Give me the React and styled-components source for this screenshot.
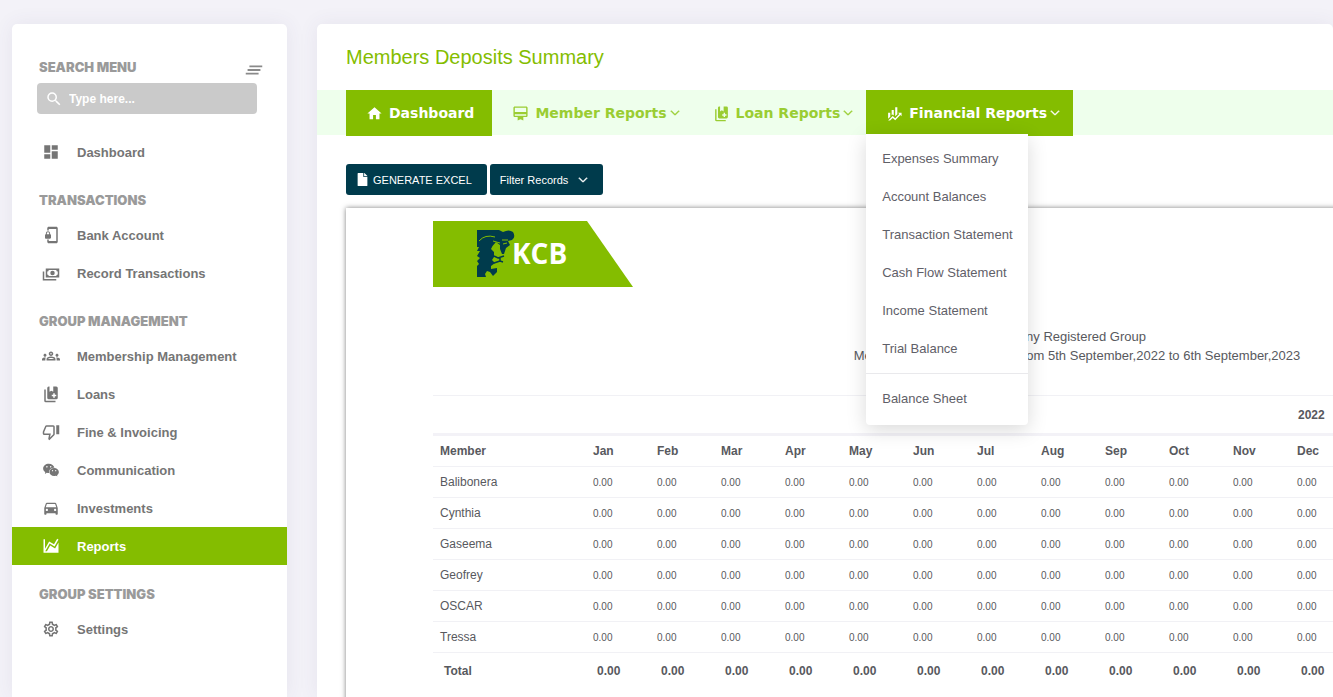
import React, { useState } from 'react'
import styled, { createGlobalStyle, css } from 'styled-components'
import {
  MdCardMembership,
  MdClearAll,
  MdDashboard,
  MdDirectionsCar,
  MdHome,
  MdOutlineGroups,
  MdOutlineSettings,
  MdPhonelinkLock,
  MdSearch,
} from 'react-icons/md'
import { AiFillWechat } from 'react-icons/ai'
import { BsChevronDown } from 'react-icons/bs'
import { FaFile } from 'react-icons/fa'

const Glyph = ({ d, size = 18 }) => (
  <svg width={size} height={size} viewBox="0 0 24 24" fill="currentColor" aria-hidden="true">
    <path fillRule="evenodd" d={d} />
  </svg>
)

const CashIcon = (props) => (
  <Glyph
    {...props}
    d="M5 6H23V18H5V6ZM14 9A3 3 0 0 1 17 12A3 3 0 0 1 14 15A3 3 0 0 1 11 12A3 3 0 0 1 14 9ZM9 8A2 2 0 0 1 7 10V14A2 2 0 0 1 9 16H19A2 2 0 0 1 21 14V10A2 2 0 0 1 19 8H9ZM1 10H3V20H19V22H1V10Z"
  />
)
const BooksIcon = (props) => (
  <Glyph
    {...props}
    d="M3 6V21A2 2 0 0 0 5 23H18V21H5V6H3ZM9 2H10V9L12.500 7.500L15 9V2H19A2 2 0 0 1 21 4V17A2 2 0 0 1 19 19H9A2 2 0 0 1 7 17V4A2 2 0 0 1 9 2ZM15 11V13H13V15H15V17H17V15H19V13H17V11H15Z"
  />
)
const ThumbDownIcon = (props) => (
  <Glyph
    {...props}
    d="M19 15V3H23V15H19M15 3A2 2 0 0 1 17 5V15C17 15.550 16.780 16.050 16.410 16.410L9.830 23L8.770 21.940C8.500 21.670 8.330 21.300 8.330 20.880L8.360 20.570L9.310 16H3C1.890 16 1 15.100 1 14V12C1 11.740 1.050 11.500 1.140 11.270L4.160 4.220C4.460 3.500 5.170 3 6 3H15M15 5H5.970L3 12V14H11.780L10.650 19.320L15 14.970V5Z"
  />
)
const ChartIcon = (props) => (
  <Glyph
    {...props}
    d="M17.450 15.180L22 7.310V21H2V3H4V15.540L9.500 6L16 9.780L20.240 2.450L21.970 3.450L16.740 12.500L10.230 8.750L4.310 19H6.570L10.960 11.440L17.450 15.180Z"
  />
)
const FinanceIcon = (props) => (
  <Glyph
    {...props}
    d="M6 16.500L3 19.440V11H6M11 14.660L9.430 13.320L8 14.640V7H11M16 13L13 16V3H16M18.810 12.810L17 11H22V16L20.210 14.210L13 21.360L9.530 18.340L5.750 22H3L9.470 15.660L13 18.640"
  />
)

const menu = [
  { items: [{ label: 'Dashboard', Icon: MdDashboard }] },
  {
    title: 'TRANSACTIONS',
    items: [
      { label: 'Bank Account', Icon: MdPhonelinkLock },
      { label: 'Record Transactions', Icon: CashIcon },
    ],
  },
  {
    title: 'GROUP MANAGEMENT',
    items: [
      { label: 'Membership Management', Icon: MdOutlineGroups },
      { label: 'Loans', Icon: BooksIcon },
      { label: 'Fine & Invoicing', Icon: ThumbDownIcon },
      { label: 'Communication', Icon: AiFillWechat },
      { label: 'Investments', Icon: MdDirectionsCar },
      { label: 'Reports', Icon: ChartIcon },
    ],
  },
  { title: 'GROUP SETTINGS', items: [{ label: 'Settings', Icon: MdOutlineSettings }] },
]

const financialLinks = [
  'Expenses Summary',
  'Account Balances',
  'Transaction Statement',
  'Cash Flow Statement',
  'Income Statement',
  'Trial Balance',
]

const months = ['Jan', 'Feb', 'Mar', 'Apr', 'May', 'Jun', 'Jul', 'Aug', 'Sep', 'Oct', 'Nov', 'Dec']
const members = ['Balibonera', 'Cynthia', 'Gaseema', 'Geofrey', 'OSCAR', 'Tressa']

const Logo = () => (
  <LogoSvg viewBox="0 0 200 66" role="img" aria-label="KCB">
    <path d="M0 0H154L200 66H0Z" fill="#84bd00" />
    {/* mane, brow and the curl on the right */}
    <path
      d="M44 9H66L70 11Q76 8 80 11Q83 16 79 19L75 20L77 24L73 27L71 33L69 33L67 28V24L63 21Q59 25 58 28L61 31V36L59 39L62 42L58 45V48L64 47V51L60 55L57 51L54 50L52 53L53 56H44V45L46 43L44 40L47 37L44 35L47 30L44 30L46 26H44Z"
      fill="#003b4c"
    />
    {/* nose and mouth */}
    <path
      d="M61 35L65 37L71 35M67 36V40L70 41M67 40L61 42"
      fill="none"
      stroke="#003b4c"
      strokeWidth="1.500"
    />
    {/* brow and eye highlights */}
    <path
      d="M46 20Q52 13 62 16M60 20L67 22M69 19L75 19M70 23L74 22"
      fill="none"
      stroke="#84bd00"
      strokeWidth="1"
    />
    <text x="79" y="43" fill="#fff" fontFamily="'Open Sans', sans-serif" fontSize="28" fontWeight="700">
      KCB
    </text>
  </LogoSvg>
)

const Chevron = () => <BsChevronDown size={10} stroke="currentColor" strokeWidth={1.5} />

export default function App() {
  const [active, setActive] = useState('Reports')
  const [isOpen, setOpen] = useState(true)

  return (
    <>
      <GlobalStyle />
      <Page>
        <Sidebar>
          <SearchHead>
            <SearchLabel htmlFor="menu-search">SEARCH MENU</SearchLabel>
            <ToggleButton type="button" aria-label="Collapse menu">
              <MdClearAll size={22} />
            </ToggleButton>
          </SearchHead>
          <SearchBox>
            <MdSearch size={18} />
            <SearchInput id="menu-search" type="text" placeholder="Type here..." />
          </SearchBox>
          <nav>
            {menu.map(({ title, items }) => (
              <MenuGroup key={title || 'main'}>
                {title && <MenuTitle>{title}</MenuTitle>}
                {items.map(({ label, Icon }) => (
                  <MenuLink
                    key={label}
                    href="#"
                    $active={active === label}
                    onClick={() => setActive(label)}
                  >
                    <Icon size={18} />
                    {label}
                  </MenuLink>
                ))}
              </MenuGroup>
            ))}
          </nav>
        </Sidebar>

        <Main>
          <PageTitle>Members Deposits Summary</PageTitle>
          <TabBar>
            <Tab type="button" $filled $right={18}>
              <MdHome size={17} />
              Dashboard
            </Tab>
            <Tab type="button">
              <MdCardMembership size={17} />
              <TabText>
                Member Reports <Chevron />
              </TabText>
            </Tab>
            <Tab type="button">
              <BooksIcon size={17} />
              <TabText>
                Loan Reports <Chevron />
              </TabText>
            </Tab>
            <Dropdown>
              <Tab type="button" $filled aria-expanded={isOpen} onClick={() => setOpen(!isOpen)}>
                <FinanceIcon size={17} />
                <TabText>
                  Financial Reports <Chevron />
                </TabText>
              </Tab>
              {isOpen && (
                <DropdownMenu>
                  {financialLinks.map((label) => (
                    <DropdownLink key={label} href="#">
                      {label}
                    </DropdownLink>
                  ))}
                  <Divider />
                  <DropdownLink href="#">Balance Sheet</DropdownLink>
                </DropdownMenu>
              )}
            </Dropdown>
          </TabBar>

          <Actions>
            <ActionButton type="button" $gap={4}>
              <FaFile size={13} />
              GENERATE EXCEL
            </ActionButton>
            <ActionButton type="button" $gap={10}>
              Filter Records
              <Chevron />
            </ActionButton>
          </Actions>

          <Sheet>
            <Logo />
            <SheetHeading>
              Many Registered Group
              <br />
              Member Deposits Summary from 5th September,2022 to 6th September,2023
            </SheetHeading>
            <Table>
              <colgroup>
                <MemberCol />
                {months.map((month) => (
                  <MonthCol key={month} />
                ))}
                <MonthCol span={7} />
              </colgroup>
              <thead>
                <YearRow>
                  <th />
                  <th colSpan={19}>
                    <YearText>2022</YearText>
                  </th>
                </YearRow>
                <MonthRow>
                  <th>Member</th>
                  {months.map((month) => (
                    <th key={month}>{month}</th>
                  ))}
                  <th colSpan={7} />
                </MonthRow>
              </thead>
              <tbody>
                {members.map((member) => (
                  <MemberRow key={member}>
                    <th scope="row">{member}</th>
                    {months.map((month) => (
                      <td key={month}>0.00</td>
                    ))}
                    <td colSpan={7} />
                  </MemberRow>
                ))}
              </tbody>
              <tfoot>
                <TotalRow>
                  <th scope="row">Total</th>
                  {months.map((month) => (
                    <td key={month}>0.00</td>
                  ))}
                  <td colSpan={7} />
                </TotalRow>
              </tfoot>
            </Table>
          </Sheet>
        </Main>
      </Page>
    </>
  )
}

const GlobalStyle = createGlobalStyle`
  * {
    box-sizing: border-box;
  }

  body {
    margin: 0;
    overflow: hidden;
    background: #f3f2f8;
    color: #58595e;
    font-family: 'Liberation Sans', Arial, sans-serif;
    font-size: 13px;
  }

  button,
  input {
    font-family: inherit;
  }

  svg {
    flex-shrink: 0;
  }
`

const Page = styled.div`
  display: flex;
  gap: 30px;
  height: 100vh;
  padding: 24px 0 0 12px;
`

const card = css`
  background: #ffffff;
  border-radius: 5px 5px 0 0;
  box-shadow: 0 0 20px rgba(80, 70, 120, 0.08);
`

const Sidebar = styled.aside`
  ${card}
  flex: 0 0 275px;
  padding-top: 33px;
`

const SearchHead = styled.div`
  display: flex;
  justify-content: space-between;
  height: 26px;
  padding: 0 22px 0 27px;
`

const heading = css`
  color: #9a9a9a;
  font-weight: 900;
  font-family: Inter, 'Liberation Sans', sans-serif;
  font-size: 13px;
  line-height: 20px;
`

const SearchLabel = styled.label`
  ${heading}
`

const ToggleButton = styled.button`
  display: flex;
  align-items: center;
  padding: 0;
  border: none;
  background: none;
  color: #8a8a8a;
  cursor: pointer;
`

const SearchBox = styled.div`
  display: flex;
  align-items: center;
  gap: 4px;
  height: 31px;
  margin: 0 30px 19px 25px;
  padding: 0 8px;
  border-radius: 4px;
  background: #cacaca;
  color: #ffffff;
`

const SearchInput = styled.input`
  flex: 1;
  min-width: 0;
  border: none;
  outline: none;
  background: none;
  color: #ffffff;
  font-weight: 700;
  font-size: 12px;

  &::placeholder {
    color: #ffffff;
    opacity: 1;
  }
`

const MenuGroup = styled.div`
  display: flex;
  flex-direction: column;
  margin-bottom: 19px;
`

const MenuTitle = styled.h2`
  ${heading}
  margin: 0;
  padding: 0 27px 6px;
`

const MenuLink = styled.a`
  display: flex;
  align-items: center;
  gap: 17px;
  height: 38px;
  padding: 0 30px;
  background: ${({ $active }) => ($active ? '#84bd00' : 'transparent')};
  color: ${({ $active }) => ($active ? '#ffffff' : '#757575')};
  font-weight: 700;
  font-size: 13px;
  text-decoration: none;
`

const Main = styled.main`
  ${card}
  flex: 1;
  min-width: 0;
  overflow: hidden;
`

const PageTitle = styled.h1`
  margin: 0;
  padding: 20px 29px;
  color: #84bd00;
  font-weight: 400;
  font-size: 20px;
  line-height: 26px;
`

const TabBar = styled.div`
  display: flex;
  height: 45px;
  padding-left: 29px;
  background: #eeffec;
`

const Tab = styled.button`
  display: flex;
  align-items: center;
  gap: 6px;
  height: 46px;
  padding: 0 ${({ $right = 13 }) => $right}px 0 20px;
  border: none;
  background: ${({ $filled }) => ($filled ? '#84bd00' : 'transparent')};
  color: ${({ $filled }) => ($filled ? '#ffffff' : '#9acd32')};
  font-weight: 700;
  font-family: 'Arial Black', 'DejaVu Sans', sans-serif;
  font-size: 14px;
  white-space: nowrap;
  cursor: pointer;
`

const TabText = styled.span`
  display: flex;
  align-items: center;
  gap: 3px;
`

const Dropdown = styled.div`
  position: relative;
`

const DropdownMenu = styled.div`
  position: absolute;
  top: 44px;
  left: 0;
  z-index: 2;
  width: 162px;
  padding: 6px 0 7px;
  border-radius: 0 0 4px 4px;
  background: #ffffff;
  box-shadow: 0 5px 20px rgba(0, 0, 0, 0.15);
`

const DropdownLink = styled.a`
  display: block;
  padding: 0 16px;
  color: #5f6068;
  font-size: 13px;
  line-height: 38px;
  text-decoration: none;
  white-space: nowrap;
`

const Divider = styled.hr`
  margin: 5px 0 6px;
  border: none;
  border-top: 1px solid #e9e9ec;
`

const Actions = styled.div`
  display: flex;
  gap: 3px;
  padding: 29px 29px 13px;
`

const ActionButton = styled.button`
  display: flex;
  align-items: center;
  gap: ${({ $gap }) => $gap}px;
  height: 31px;
  padding: 0 15px 0 10px;
  border: none;
  border-radius: 3px;
  background: #003b4c;
  color: #ffffff;
  font-size: 11px;
  cursor: pointer;
`

const Sheet = styled.section`
  width: 1462px;
  min-height: 600px;
  margin-left: 29px;
  padding: 13px 87px;
  background: #ffffff;
  box-shadow: 0 0 5px rgba(0, 0, 0, 0.5);
`

const LogoSvg = styled.svg`
  display: block;
  width: 200px;
  height: 66px;
`

const SheetHeading = styled.p`
  margin: 40px 0 30px;
  font-size: 13px;
  line-height: 19px;
  text-align: center;
`

const Table = styled.table`
  width: 100%;
  table-layout: fixed;
  border-collapse: collapse;
  text-align: left;

  th,
  td {
    padding: 0 7px;
    border-top: 1px solid #f1f1f5;
    white-space: nowrap;
  }
`

const MemberCol = styled.col`
  width: 153px;
`

const MonthCol = styled.col`
  width: 64px;
`

const YearRow = styled.tr`
  height: 39px;
  font-size: 12px;
`

const YearText = styled.span`
  display: block;
  padding-left: 705px;
`

const MonthRow = styled.tr`
  height: 32px;
  font-size: 12px;

  && th {
    border-top: 3px solid #f3f2f7;
  }
`

const MemberRow = styled.tr`
  height: 31px;

  th {
    font-weight: 400;
    font-size: 12px;
  }

  td {
    font-size: 10px;
  }
`

const TotalRow = styled.tr`
  height: 36px;
  font-weight: 700;
  font-size: 12px;

  && th,
  && td {
    padding-left: 11px;
  }
`
